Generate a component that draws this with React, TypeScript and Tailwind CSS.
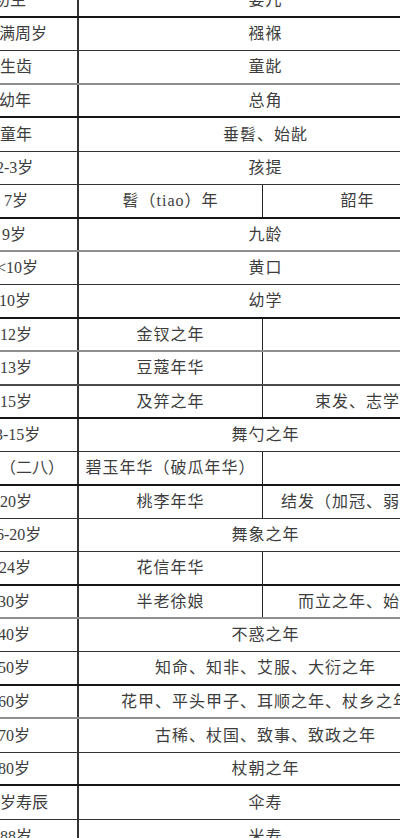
import React from "react";

type Line = "thick" | "thin" | "gray" | "medium" | "none";
type Row = { left: string; lx: number; cells: string[]; line: Line; h: number };

const rows: Row[] = [
  { left: "初生", lx: -6, cells: ["婴儿"], line: "thick", h: 34 },
  { left: "满周岁", lx: -1, cells: ["襁褓"], line: "thin", h: 33 },
  { left: "生齿", lx: 0, cells: ["童龀"], line: "gray", h: 34 },
  { left: "幼年", lx: -1, cells: ["总角"], line: "thick", h: 33 },
  { left: "童年", lx: 0, cells: ["垂髫、始龀"], line: "thin", h: 34 },
  { left: "2-3岁", lx: -4, cells: ["孩提"], line: "thin", h: 33 },
  { left: "7岁", lx: 4, cells: ["髫（tiao）年", "韶年"], line: "thick", h: 34 },
  { left: "9岁", lx: 2, cells: ["九龄"], line: "gray", h: 33 },
  { left: "<10岁", lx: -3, cells: ["黄口"], line: "thin", h: 33 },
  { left: "10岁", lx: -1, cells: ["幼学"], line: "thick", h: 34 },
  { left: "12岁", lx: 0, cells: ["金钗之年", ""], line: "gray", h: 33 },
  { left: "13岁", lx: 0, cells: ["豆蔻年华", ""], line: "medium", h: 34 },
  { left: "15岁", lx: 0, cells: ["及笄之年", "束发、志学"], line: "thick", h: 33 },
  { left: "13-15岁", lx: -13, cells: ["舞勺之年"], line: "thin", h: 33 },
  { left: "（二八）", lx: 0, cells: ["碧玉年华（破瓜年华）", ""], line: "thick", h: 34 },
  { left: "20岁", lx: 0, cells: ["桃李年华", "结发（加冠、弱冠）"], line: "thin", h: 33 },
  { left: "16-20岁", lx: -12, cells: ["舞象之年"], line: "thin", h: 33 },
  { left: "24岁", lx: -1, cells: ["花信年华", ""], line: "thick", h: 34 },
  { left: "30岁", lx: -2, cells: ["半老徐娘", "而立之年、始室"], line: "gray", h: 33 },
  { left: "40岁", lx: -2, cells: ["不惑之年"], line: "thin", h: 33 },
  { left: "50岁", lx: -2, cells: ["知命、知非、艾服、大衍之年"], line: "thick", h: 34 },
  { left: "60岁", lx: -2, cells: ["花甲、平头甲子、耳顺之年、杖乡之年"], line: "gray", h: 33 },
  { left: "70岁", lx: -2, cells: ["古稀、杖国、致事、致政之年"], line: "thin", h: 34 },
  { left: "80岁", lx: -2, cells: ["杖朝之年"], line: "thick", h: 33 },
  { left: "80岁寿辰", lx: -16, cells: ["伞寿"], line: "thin", h: 34 },
  { left: "88岁", lx: 0, cells: ["米寿"], line: "none", h: 34 },
];

const lineClass: Record<Line, string> = {
  thick: "border-b-2 border-[#161616]",
  thin: "border-b border-[#333333]",
  gray: "border-b-2 border-[#8e8e8e]",
  medium: "border-b-2 border-[#4a4a4a]",
  none: "",
};

export default function App() {
  return (
    <div
      className="w-[400px] h-[838px] overflow-hidden bg-white text-[#3d3d3d]"
      style={{ fontFamily: '"Liberation Serif", "Noto Sans CJK SC", serif' }}
    >
      <div className="w-[520px] -mt-[16px] flex flex-col">
        {rows.map((r, i) => (
          <div
            key={i}
            className={`flex shrink-0 ${lineClass[r.line]}`}
            style={{ height: r.h }}
          >
            <div className="w-[79px] shrink-0 border-r-2 border-[#333333] overflow-hidden flex items-center">
              <span
                className="whitespace-nowrap text-[16px] leading-none"
                style={{ marginLeft: r.lx }}
              >
                {r.left}
              </span>
            </div>
            {r.cells.length === 1 ? (
              <div className="w-[373px] shrink-0 flex items-center justify-center">
                <span className="whitespace-nowrap text-[16px] leading-none tracking-[1px]">
                  {r.cells[0]}
                </span>
              </div>
            ) : (
              <>
                <div className="w-[184px] shrink-0 border-r border-[#222222] flex items-center justify-center">
                  <span className="whitespace-nowrap text-[16px] leading-none tracking-[1px]">
                    {r.cells[0]}
                  </span>
                </div>
                <div className="w-[189px] shrink-0 flex items-center justify-center">
                  <span className="whitespace-nowrap text-[16px] leading-none tracking-[1px]">
                    {r.cells[1]}
                  </span>
                </div>
              </>
            )}
          </div>
        ))}
      </div>
    </div>
  );
}
